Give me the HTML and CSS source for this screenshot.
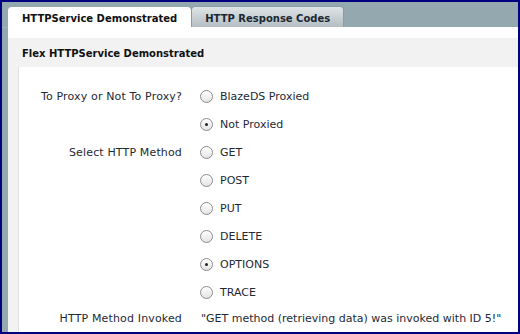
FILE: index.html
```html
<!DOCTYPE html>
<html lang="en">
<head>
    <meta charset="UTF-8">
    <title>Flex HTTPService Demonstrated</title>
    <link rel="stylesheet" href="styles.css">
</head>
<body>

    <div class="app-frame">
        <!-- Tabs -->
        <div class="tab-bar">
            <div class="tab active">HTTPService Demonstrated</div>
            <div class="tab">HTTP Response Codes</div>
        </div>

        <!-- Panel -->
        <div class="panel">
            <div class="panel-title">Flex HTTPService Demonstrated</div>
            <div class="panel-body">
                <div class="form-grid">
                    <div class="form-label">To Proxy or Not To Proxy?</div>
                    <label class="radio"><span class="radio-dot"></span>BlazeDS Proxied</label>

                    <div class="form-label"></div>
                    <label class="radio"><span class="radio-dot checked"></span>Not Proxied</label>

                    <div class="form-label">Select HTTP Method</div>
                    <label class="radio"><span class="radio-dot"></span>GET</label>

                    <div class="form-label"></div>
                    <label class="radio"><span class="radio-dot"></span>POST</label>

                    <div class="form-label"></div>
                    <label class="radio"><span class="radio-dot"></span>PUT</label>

                    <div class="form-label"></div>
                    <label class="radio"><span class="radio-dot"></span>DELETE</label>

                    <div class="form-label"></div>
                    <label class="radio"><span class="radio-dot checked"></span>OPTIONS</label>

                    <div class="form-label"></div>
                    <label class="radio"><span class="radio-dot"></span>TRACE</label>

                    <div class="form-label last">HTTP Method Invoked</div>
                    <div class="result last">"GET method (retrieving data) was invoked with ID 5!"</div>
                </div>
            </div>
        </div>
    </div>

</body>
</html>
```

FILE: styles.css
```css
/* General Styles */
* {
    margin: 0;
    padding: 0;
    box-sizing: border-box;
}

body {
    font-family: 'DejaVu Sans', Verdana, sans-serif;
    font-size: 11px;
    color: #1e2a36;
    background: #000080;
}

/* Frame */
.app-frame {
    width: 520px;
    height: 334px;
    border: 2px solid #000080;
    background: #94a8b0;
    display: flex;
    flex-direction: column;
    overflow: hidden;
}

/* Tabs */
.tab-bar {
    flex-shrink: 0;
    display: flex;
    align-items: flex-end;
    height: 26px;
    padding-left: 6px;
    border-bottom: 1px solid #a4b4bb;
}

.tab {
    height: 21px;
    padding: 2px 13px 0;
    display: flex;
    align-items: center;
    font-size: 10px;
    font-weight: bold;
    color: #1c2733;
    background: linear-gradient(#dfe4e6, #b3bec3);
    border: 1px solid #8c9ca4;
    border-bottom: none;
    border-radius: 4px 4px 0 0;
}

.tab.active {
    height: 20px;
    background: #fff;
    border-color: #fff;
    color: #111;
}

/* Panel */
.panel {
    flex: 1;
    min-height: 0;
    overflow: hidden;
    margin-left: 6px;
    margin-top: -1px;
    padding-top: 11px;
    background: #fff;
    display: flex;
    flex-direction: column;
}

.panel-title {
    flex-shrink: 0;
    height: 29px;
    padding: 1px 0 0 14px;
    display: flex;
    align-items: center;
    background: #f2f2f2;
    font-size: 10px;
    font-weight: bold;
    color: #111;
}

.panel-body {
    flex: 1;
    background: #fff;
    border-left: 10px solid #f2f2f2;
    box-shadow: inset 1px 0 0 #e2e2e2;
    padding-top: 15px;
}

/* Form */
.form-grid {
    display: grid;
    grid-template-columns: 164px 1fr;
    grid-auto-rows: 28px;
    column-gap: 18px;
}

.form-label {
    display: flex;
    align-items: center;
    justify-content: flex-end;
    letter-spacing: 0.15px;
}

.radio {
    display: flex;
    align-items: center;
    gap: 7px;
}

.radio-dot {
    width: 13px;
    height: 13px;
    border-radius: 50%;
    border: 1px solid #8d8d8d;
    background: linear-gradient(#ffffff, #e4e4e4);
    display: flex;
    align-items: center;
    justify-content: center;
}

.radio-dot.checked::after {
    content: "";
    width: 3px;
    height: 3px;
    border-radius: 50%;
    background: #222;
}

.last {
    height: 24px;
    align-self: start;
}

.result {
    display: flex;
    align-items: center;
    padding-left: 1px;
}
```
